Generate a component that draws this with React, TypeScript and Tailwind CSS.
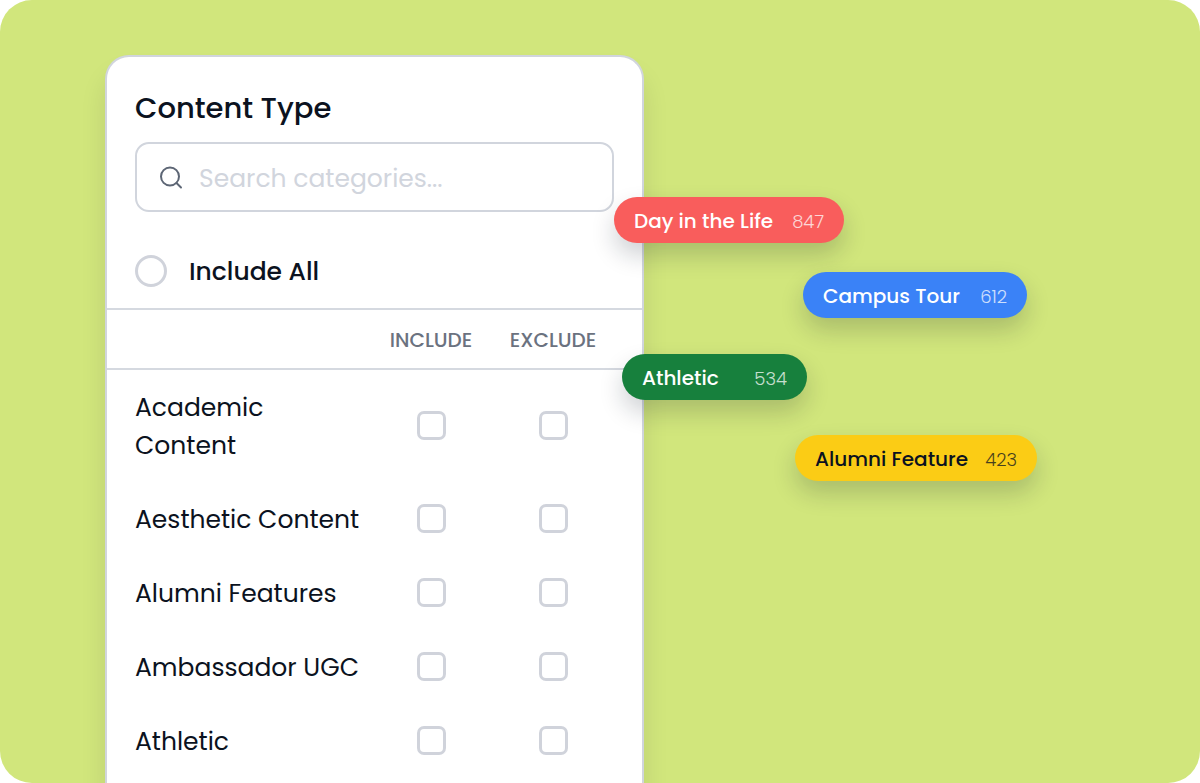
import React from 'react';

interface Tag {
  label: string;
  count: number;
  className: string;
}

const categories: string[] = [
  'Academic Content',
  'Aesthetic Content',
  'Alumni Features',
  'Ambassador UGC',
  'Athletic',
];

const tags: Tag[] = [
  { label: 'Day in the Life', count: 847, className: 'left-[614px] top-[197px] w-[230px] bg-[#f95d5c] text-white' },
  { label: 'Campus Tour', count: 612, className: 'left-[803px] top-[272px] w-[224px] bg-[#3a82f7] text-white' },
  { label: 'Athletic', count: 534, className: 'left-[622px] top-[354px] w-[185px] bg-[#17803d] text-white' },
  { label: 'Alumni Feature', count: 423, className: 'left-[795px] top-[435px] w-[242px] bg-[#fbcc15] text-[#0b1220]' },
];

const FloatingTag: React.FC<{ tag: Tag }> = ({ tag }) => (
  <div
    className={`absolute flex h-[46px] items-center justify-between rounded-full px-5 pt-0.5 text-[20px] whitespace-nowrap shadow-[0_12px_24px_rgba(15,23,42,0.2)] ${tag.className}`}
  >
    <span className="font-medium">{tag.label}</span>
    <span className="text-[18px] font-light opacity-75">{tag.count}</span>
  </div>
);

const Tick: React.FC<{ label: string }> = ({ label }) => (
  <input
    type="checkbox"
    aria-label={label}
    className="block mx-auto size-[29px] appearance-none rounded-[7px] border-3 border-[#d0d3db] bg-white checked:bg-[#3a82f7]"
  />
);

const ContentTypePanel: React.FC = () => (
  <div className="flex w-full max-w-[539px] shrink-0 flex-col rounded-t-[24px] border-2 border-b-0 border-[#d1d5dd] bg-white shadow-[0_20px_26px_rgba(15,23,42,0.1)]">
    <div className="px-7 pt-7">
      <h2 className="text-[29px] leading-[46px] font-medium">Content Type</h2>

      {/* Search */}
      <label className="mt-[11px] flex h-[70px] items-center gap-4 rounded-[14px] border-2 border-[#d1d5dd] px-[22px]">
        <svg className="size-6 shrink-0 text-[#5d6675]" viewBox="0 0 24 24" fill="none" stroke="currentColor" strokeWidth="2" strokeLinecap="round" aria-hidden="true">
          <circle cx="11" cy="11.5" r="9" />
          <path d="M17.5 18 22 22.5" />
        </svg>
        <input
          type="text"
          aria-label="Search categories"
          placeholder="Search categories..."
          className="w-full min-w-0 bg-transparent pt-1 text-[25px] outline-none placeholder:text-[#d1d5dd]"
        />
      </label>

      <label className="flex items-center gap-[22px] pt-[42px] pb-5 text-[25px] leading-[34px] font-medium">
        <input
          type="radio"
          name="include-all"
          className="size-8 shrink-0 appearance-none rounded-full border-3 border-[#d0d3db] checked:bg-[#3a82f7]"
        />
        <span className="pt-0.5 leading-8">Include All</span>
      </label>
    </div>

    <table className="w-full table-fixed border-collapse">
      <thead>
        <tr className="h-[60px] border-y-2 border-[#d5d9e0] text-[20px] text-[#6b7280]">
          <th aria-label="Category" />
          <th className="w-[122px] pt-0.5 font-medium" scope="col">INCLUDE</th>
          <th className="w-[150px] pt-0.5 pr-7 font-medium" scope="col">EXCLUDE</th>
        </tr>
      </thead>
      <tbody className="text-[25px] leading-[38px]">
        {categories.map((name) => (
          <tr key={name}>
            <th scope="row" className="pt-[19px] pr-2 pb-[17px] pl-7 text-left font-normal">{name}</th>
            <td className="pb-0.5">
              <Tick label={`Include ${name}`} />
            </td>
            <td className="pr-7 pb-0.5">
              <Tick label={`Exclude ${name}`} />
            </td>
          </tr>
        ))}
      </tbody>
    </table>
  </div>
);

export default function App() {
  return (
    <main className="relative flex h-screen items-stretch overflow-hidden rounded-[32px] bg-[#d1e67c] pt-[55px] pl-[105px] font-['Poppins','Inter',sans-serif] text-[#0b1220]">
      <ContentTypePanel />
      {tags.map((tag) => (
        <FloatingTag key={tag.label} tag={tag} />
      ))}
    </main>
  );
}
